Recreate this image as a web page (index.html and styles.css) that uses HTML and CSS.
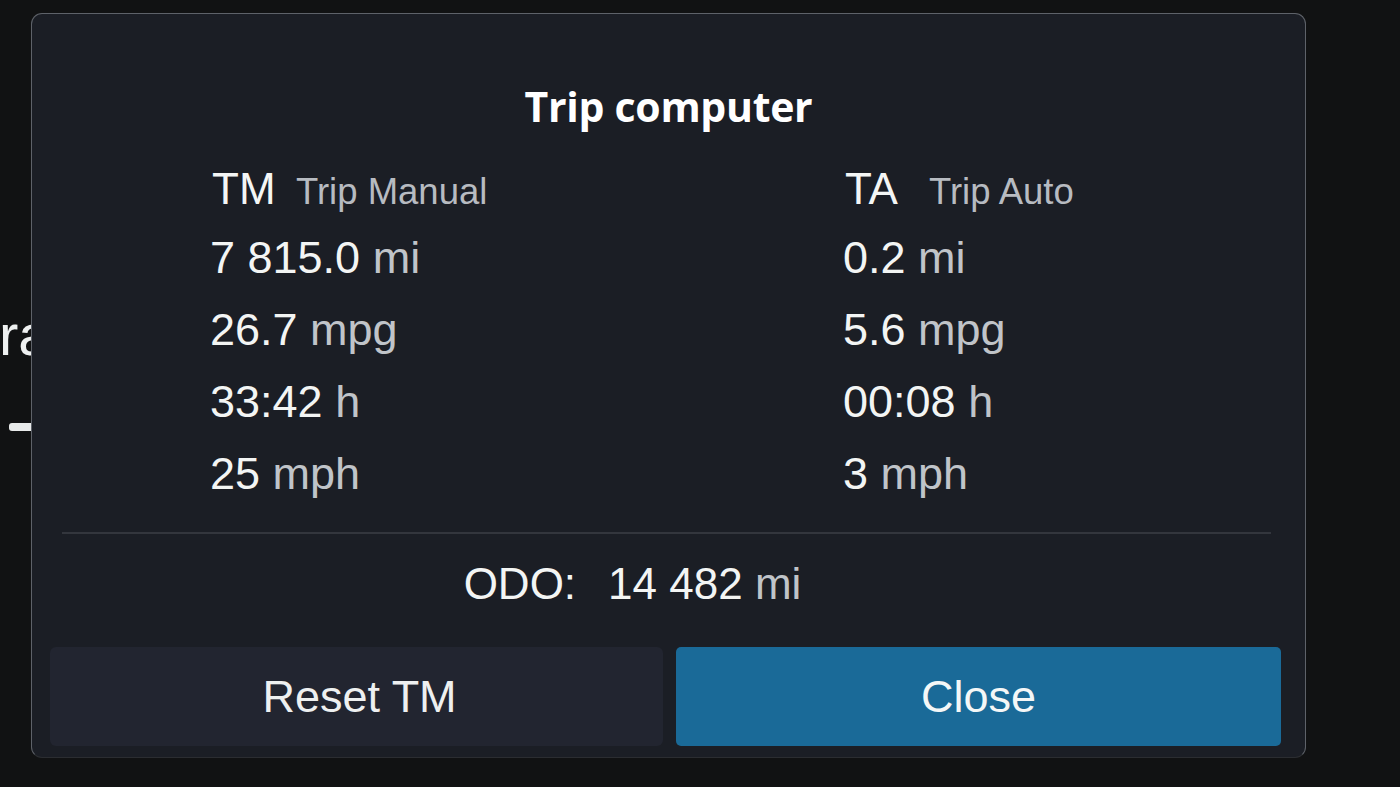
FILE: index.html
```html
<!DOCTYPE html>
<html lang="en">
<head>
<meta charset="utf-8">
<title>Trip computer</title>
<link rel="stylesheet" href="styles.css">
</head>
<body>
<div class="backdrop">
  <div class="side">
    <div class="side-label">ra</div>
    <div class="side-dash"></div>
  </div>
</div>

<div class="dialog">
  <h1 class="title">Trip computer</h1>

  <div class="trips">
    <div class="trip">
      <div class="trip-head"><span class="abbr">TM</span><span class="label">Trip Manual</span></div>
      <div class="stat"><span class="num">7 815.0</span> <span class="unit">mi</span></div>
      <div class="stat"><span class="num">26.7</span> <span class="unit">mpg</span></div>
      <div class="stat"><span class="num">33:42</span> <span class="unit">h</span></div>
      <div class="stat"><span class="num">25</span> <span class="unit">mph</span></div>
    </div>
    <div class="trip">
      <div class="trip-head"><span class="abbr">TA</span><span class="label">Trip Auto</span></div>
      <div class="stat"><span class="num">0.2</span> <span class="unit">mi</span></div>
      <div class="stat"><span class="num">5.6</span> <span class="unit">mpg</span></div>
      <div class="stat"><span class="num">00:08</span> <span class="unit">h</span></div>
      <div class="stat"><span class="num">3</span> <span class="unit">mph</span></div>
    </div>
  </div>

  <div class="divider"></div>

  <div class="odo"><span class="num">ODO:</span><span class="num odo-val">14 482</span> <span class="unit">mi</span></div>

  <div class="actions">
    <button class="btn btn-secondary">Reset TM</button>
    <button class="btn btn-primary">Close</button>
  </div>
</div>
</body>
</html>
```

FILE: styles.css
```css
* { box-sizing: border-box; }

html, body {
  margin: 0;
  padding: 0;
  width: 1400px;
  height: 787px;
  overflow: hidden;
  background: #111213;
  font-family: "Liberation Sans", Arial, sans-serif;
  color: #f1f3f2;
}

.backdrop {
  display: flex;
  height: 787px;
}

.side {
  width: 34px;
  overflow: hidden;
  display: flex;
  flex-direction: column;
  padding-top: 300px;
}

.side-label {
  font-size: 58px;
  line-height: 70px;
  color: #eef0f0;
  margin-left: -1px;
  white-space: nowrap;
}

.side-dash {
  width: 40px;
  height: 8px;
  border-radius: 3px;
  background: #e8eaea;
  margin-top: 53px;
  margin-left: 9px;
}

.dialog {
  position: absolute;
  left: 31px;
  top: 13px;
  width: 1275px;
  height: 745px;
  background: #1b1e25;
  border: 1.5px solid #5e6269;
  border-bottom-color: #2b2d31;
  border-radius: 11px;
  display: flex;
  flex-direction: column;
  padding: 0 24px 11px 18px;
}

.title {
  margin: 68px 0 0;
  height: 48px;
  line-height: 48px;
  text-align: center;
  font-family: "Open Sans", "Liberation Sans", sans-serif;
  font-weight: 700;
  font-size: 41px;
  color: #ffffff;
  letter-spacing: -0.3px;
  padding-left: 6px;
}

.trips {
  display: grid;
  grid-template-columns: 633px 1fr;
  padding-left: 160px;
  margin-top: 30px;
}

.trip {
  display: flex;
  flex-direction: column;
}

.trip-head {
  display: flex;
  align-items: baseline;
  height: 62px;
  line-height: 58px;
}

.abbr {
  width: 86px;
  font-size: 44px;
  color: #f4f6f5;
  padding-left: 2px;
}

.label {
  font-size: 36.5px;
  color: #b7bbc1;
}

.stat {
  height: 72px;
  line-height: 72px;
  font-size: 45px;
  white-space: nowrap;
}

.num { color: #f3f5f4; }
.unit { color: #c0c4c9; }

.divider {
  height: 2px;
  background: #33363d;
  margin: 22px 10px 0 12px;
}

.odo {
  height: 60px;
  line-height: 60px;
  margin-top: 20px;
  text-align: center;
  font-size: 44px;
  white-space: nowrap;
  padding-right: 66px;
}

.odo-val { margin-left: 32px; }

.actions {
  margin-top: auto;
  display: grid;
  grid-template-columns: 613px 1fr;
  gap: 13px;
  height: 99px;
}

.btn {
  border: none;
  border-radius: 6px;
  font-family: "Liberation Sans", Arial, sans-serif;
  font-size: 45px;
  color: #eef0f0;
  padding: 0;
}

.btn-secondary {
  background: #222530;
  padding-left: 6px;
}

.btn-primary {
  background: #1a6a98;
  color: #f4f7f7;
  border-radius: 5px;
}
```
